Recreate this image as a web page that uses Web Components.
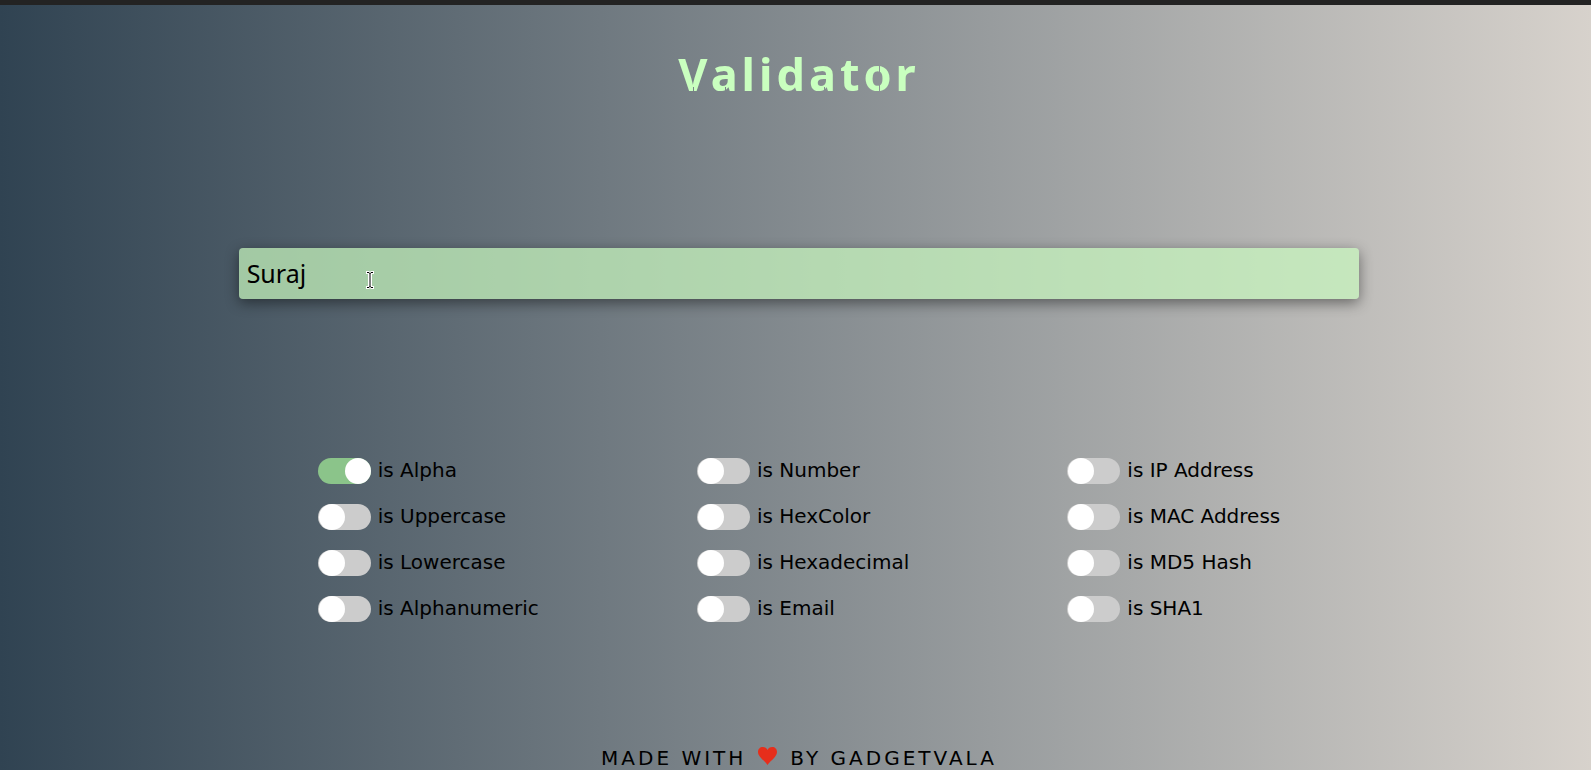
<!DOCTYPE html>
<html lang="en">
<head>
<meta charset="utf-8">
<title>Validator</title>
<style>
html { min-height: 100%; background: linear-gradient(to right, #304352, #d7d2cc); }
body { margin: 0; font: 20px/26px "DejaVu Sans", sans-serif; color: #000; }
</style>
</head>
<body>
<validator-app></validator-app>
<script>
class ValidatorTitle extends HTMLElement {
  constructor() {
    super();
    this.attachShadow({ mode: "open" }).innerHTML = `
      <style>
        :host { display: block; text-align: center; }
        h1 { display: inline-block; margin: 0; color: #c9ffbf; font: 700 45px/60px "Noto Sans", sans-serif; letter-spacing: 4px; }
        /* stencil cuts: narrow vertical gaps in the V and the round letters */
        h1 {
          mask:
            linear-gradient(to right, #000 201px, transparent 0 202px, #000 0) 0 0 / 100% 43px no-repeat,
            linear-gradient(to right, #000 15px, transparent 0 16px, #000 0 47px, transparent 0 48px, #000 0 146px, transparent 0 147px, #000 0 201px, transparent 0 202px, #000 0) 0 43px / 100% 17px no-repeat;
        }
      </style>
      <h1><slot></slot></h1>`;
  }
}
customElements.define("validator-title", ValidatorTitle);

class ValidatorInput extends HTMLElement {
  constructor() {
    super();
    this.attachShadow({ mode: "open" }).innerHTML = `
      <style>
        :host { display: block; position: relative; }
        input { display: block; box-sizing: border-box; width: 100%; height: 51px; padding: 0 8px 2px; border: 0; border-radius: 4px; outline: 0;
          background: rgba(201, 249, 191, .7); color: #000; font: 25px "Noto Sans", sans-serif; box-shadow: 0 4px 14px rgba(0, 0, 0, .45); }
        svg { position: absolute; left: 127px; top: 23px; pointer-events: none; }
      </style>
      <input type="text" aria-label="Text to validate">
      <svg width="8" height="18" viewBox="0 0 8 18" aria-hidden="true">
        <path d="M0 0H3L4 1L5 0H8V3H6V15H8V18H5L4 17L3 18H0V15H2V3H0Z" fill="#fff"/>
        <path d="M1 1.500H3L4 2.500L5 1.500H7M4 2V16M1 16.500H3L4 15.500L5 16.500H7" fill="none" stroke="#000"/>
      </svg>`;
    this.shadowRoot.querySelector("input").value = this.getAttribute("value") || "";
  }
}
customElements.define("validator-input", ValidatorInput);

class CheckSwitch extends HTMLElement {
  constructor() {
    super();
    this.attachShadow({ mode: "open" }).innerHTML = `
      <style>
        :host { display: block; }
        label { display: flex; align-items: flex-start; gap: 7px; line-height: 24px; white-space: nowrap; }
        input { appearance: none; flex: none; width: 53px; height: 26px; margin: 0; border-radius: 13px; background: #ccc; }
        input::before { content: ""; display: block; width: 26px; height: 26px; margin-left: 1px; border-radius: 50%; background: #fff; }
        input:checked { background: #8bc48a; }
        input:checked::before { margin-left: 27px; }
      </style>
      <label><input type="checkbox" role="switch"><span><slot></slot></span></label>`;
    this.shadowRoot.querySelector("input").checked = this.hasAttribute("checked");
  }
}
customElements.define("check-switch", CheckSwitch);

class CheckGroup extends HTMLElement {
  constructor() {
    super();
    this.attachShadow({ mode: "open" }).innerHTML = `
      <style>:host { display: flex; flex-direction: column; gap: 20px; }</style>
      <slot></slot>`;
  }
}
customElements.define("check-group", CheckGroup);

class MadeBy extends HTMLElement {
  constructor() {
    super();
    this.attachShadow({ mode: "open" }).innerHTML = `
      <style>
        :host { display: block; }
        footer { display: flex; justify-content: center; align-items: center; gap: 12px; letter-spacing: 3px; line-height: 24px; text-transform: uppercase; white-space: nowrap; }
        svg { margin-bottom: 4px; }
      </style>
      <footer>
        <slot name="before"></slot>
        <svg width="20" height="18" viewBox="0 0 20 18" role="img" aria-label="love"><path fill="#e62e1b" d="M9.500 18C7.500 14.500 0 10 0 5C0 2 2 0 4.800 0C7 0 8.700 1.200 9.500 3C10.300 1.200 12 0 14.200 0C17 0 19 2 19 5C19 10 11.500 14.500 9.500 18Z"/></svg>
        <slot name="after"></slot>
      </footer>`;
  }
}
customElements.define("made-by", MadeBy);

class ValidatorApp extends HTMLElement {
  constructor() {
    super();
    this.attachShadow({ mode: "open" }).innerHTML = `
      <style>
        :host { display: block; border-top: 5px solid #232323; }
        main { display: flex; flex-direction: column; width: calc(70% + 7px); margin-left: 15%; padding-top: 39px; }
        validator-title { margin-bottom: 144px; }
        .checks { display: flex; justify-content: space-around; margin: 159px 0 124px; }
      </style>
      <main>
        <validator-title>Validator</validator-title>
        <validator-input value="Suraj"></validator-input>
        <div class="checks">
          <check-group>
            <check-switch checked>is Alpha</check-switch>
            <check-switch>is Uppercase</check-switch>
            <check-switch>is Lowercase</check-switch>
            <check-switch>is Alphanumeric</check-switch>
          </check-group>
          <check-group>
            <check-switch>is Number</check-switch>
            <check-switch>is HexColor</check-switch>
            <check-switch>is Hexadecimal</check-switch>
            <check-switch>is Email</check-switch>
          </check-group>
          <check-group>
            <check-switch>is IP Address</check-switch>
            <check-switch>is MAC Address</check-switch>
            <check-switch>is MD5 Hash</check-switch>
            <check-switch>is SHA1</check-switch>
          </check-group>
        </div>
        <made-by><span slot="before">Made with</span><span slot="after">by GadgetVala</span></made-by>
      </main>`;
  }
}
customElements.define("validator-app", ValidatorApp);
</script>
</body>
</html>
